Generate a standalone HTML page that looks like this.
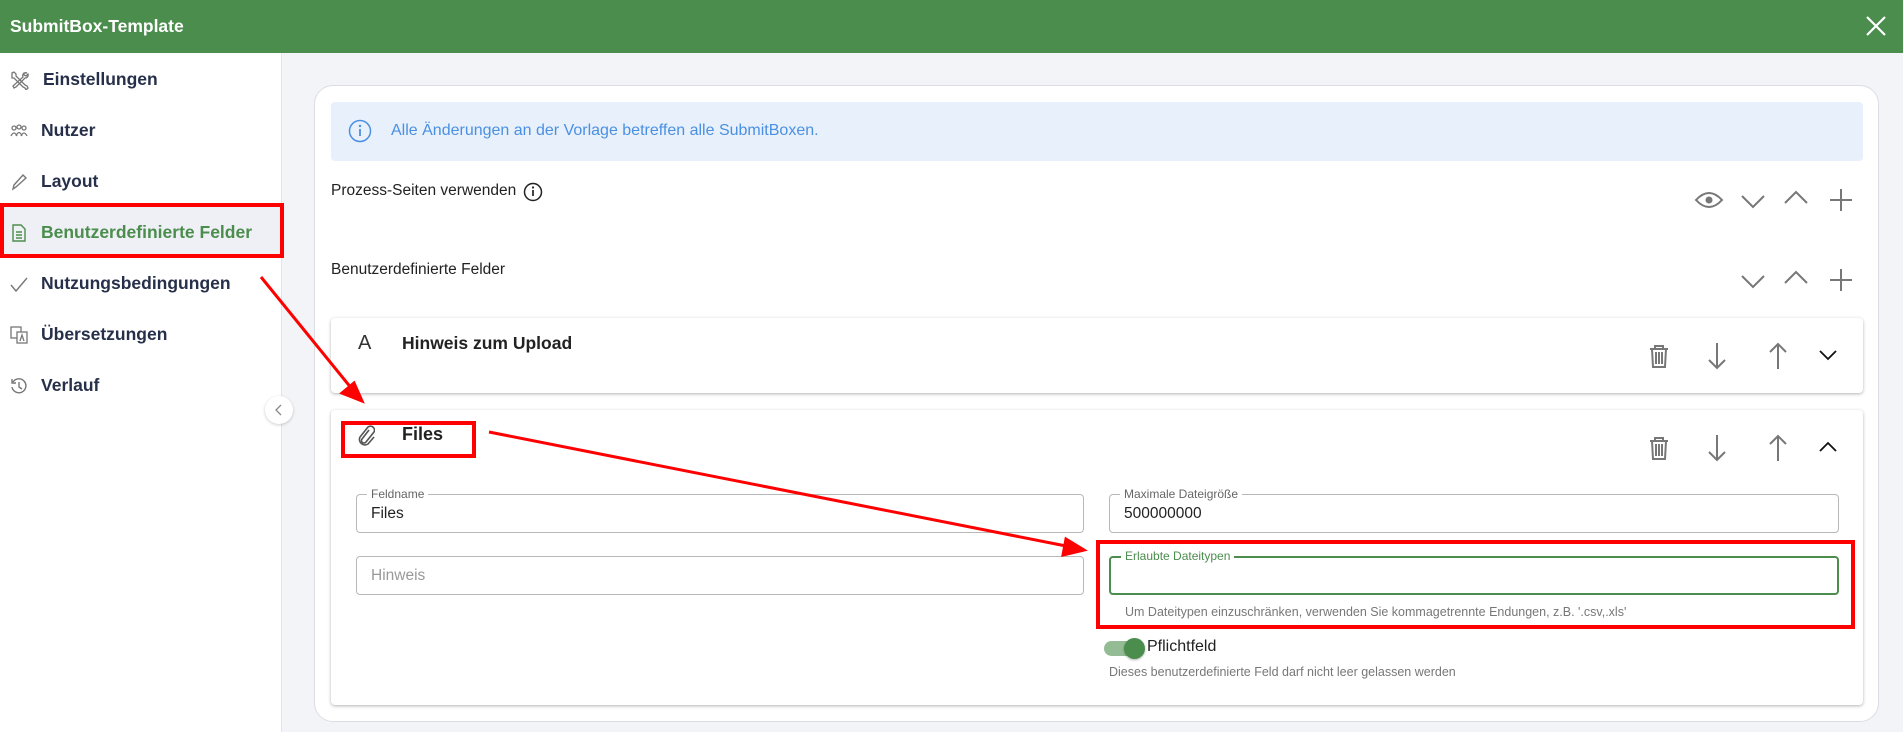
<!DOCTYPE html>
<html><head><meta charset="utf-8"><style>
*{margin:0;padding:0;box-sizing:border-box}
body{width:1903px;height:732px;overflow:hidden;background:#f3f4f8;font-family:"Liberation Sans",sans-serif;position:relative}
.a{position:absolute}
.hdr{left:0;top:0;width:1903px;height:53px;background:#4b8d4d}
.side{left:0;top:53px;width:282px;height:679px;background:#fff;border-right:1px solid #e2e4ea}
.it{position:absolute;left:0;width:282px;height:51px;display:flex;align-items:center;font-size:17.5px;font-weight:bold;color:#27304a}
.it svg{margin-left:10px;margin-right:13px}
.card{left:314px;top:85px;width:1565px;height:637px;background:#fff;border:1px solid #dcdde3;border-radius:19px}
.sub{background:#fff;border-radius:4px;box-shadow:0 1px 3px rgba(0,0,0,.3)}
.fld{border:1px solid #b8b8b8;border-radius:4px;background:#fff}
.lbl{position:absolute;top:-8px;left:10px;background:#fff;padding:0 4px;font-size:12px;color:#666}
.ic{stroke:#777;fill:none;stroke-width:2}
.red{border:4px solid #f00}
</style></head><body>
<div class="a hdr"></div>
<div class="a" style="left:10px;top:16px;color:#fff;font-weight:bold;font-size:17.5px">SubmitBox-Template</div>
<svg class="a" style="left:1865px;top:15px" width="22" height="22"><path d="M2 2L20 20M20 2L2 20" stroke="#fff" stroke-width="2.2"/></svg>
<div class="a side">
<div class="it" style="top:1px"><svg width="20" height="20" class="ic" style="stroke-width:1.3"><path d="M2 3l2-1 2 2 0 2 9 9 2 1 1 2-2 2-1-2-2-1-9-9h-2z"/><path d="M17 3a3 3 0 0 0-4 4L3 16l1 2 2-1 9-9a3 3 0 0 0 3-4l-2 2-2-1 0-2z"/></svg>Einstellungen</div>
<div class="it" style="top:52px"><svg width="18" height="18" class="ic" style="stroke-width:1.3"><circle cx="4" cy="6" r="2"/><circle cx="9" cy="5" r="2"/><circle cx="14" cy="6" r="2"/><path d="M1 14q3-6 6 0M6 14q3-7 6 0M11 14q3-6 6 0"/></svg>Nutzer</div>
<div class="it" style="top:103px"><svg width="18" height="18" class="ic" style="stroke-width:1.4"><path d="M3 16l1-4 9-10 3 3-10 9z"/></svg>Layout</div>
<div class="it" style="top:154px;background:#eef0f5;color:#4b8d4d"><svg width="18" height="18" fill="none" stroke="#4b8d4d" stroke-width="1.4"><path d="M3 1h8l4 4v12H3zM6 8h6M6 11h6M6 14h6"/></svg>Benutzerdefinierte Felder</div>
<div class="it" style="top:205px"><svg width="18" height="18" class="ic" style="stroke-width:1.4"><path d="M1 10l5 6L17 3"/></svg>Nutzungsbedingungen</div>
<div class="it" style="top:256px"><svg width="18" height="18" class="ic" style="stroke-width:1.3"><rect x="1" y="1" width="10" height="11"/><rect x="7" y="6" width="10" height="11" fill="#fff"/><path d="M10 15l2-6 2 6"/></svg>Übersetzungen</div>
<div class="it" style="top:307px"><svg width="18" height="18" class="ic" style="stroke-width:1.4"><path d="M3 5a7 7 0 1 1-1 5M2 2v4h4M9 5v5l3 2"/></svg>Verlauf</div>
</div>
<div class="a red" style="left:0;top:203px;width:284px;height:55px"></div>
<div class="a" style="left:265px;top:396px;width:28px;height:28px;border-radius:50%;background:#fff;box-shadow:0 1px 3px rgba(0,0,0,.2)"></div>
<svg class="a" style="left:274px;top:403px" width="10" height="14"><path d="M7 2L2 7l5 5" stroke="#888" fill="none" stroke-width="1.3"/></svg>

<div class="a card"></div>
<div class="a" style="left:331px;top:102px;width:1532px;height:59px;background:#e8f0fb;border-radius:4px"></div>
<svg class="a" style="left:348px;top:119px" width="24" height="24"><circle cx="12" cy="12" r="10.5" fill="none" stroke="#4a90e2" stroke-width="1.5"/><path d="M12 10v7" stroke="#4a90e2" stroke-width="1.8"/><circle cx="12" cy="7" r="1.2" fill="#4a90e2"/></svg>
<div class="a" style="left:391px;top:122px;font-size:16px;color:#4a90e2">Alle Änderungen an der Vorlage betreffen alle SubmitBoxen.</div>
<div class="a" style="left:331px;top:182px;font-size:15.5px;color:#222">Prozess-Seiten verwenden</div>
<svg class="a" style="left:523px;top:182px" width="20" height="20"><circle cx="10" cy="10" r="8.5" fill="none" stroke="#222" stroke-width="1.5"/><path d="M10 8v6" stroke="#222" stroke-width="1.7"/><circle cx="10" cy="5.5" r="1.1" fill="#222"/></svg>
<svg class="a" style="left:1694px;top:188px" width="30" height="24"><path d="M2 12q13-14 26 0q-13 14-26 0z" class="ic"/><circle cx="15" cy="12" r="3.5" fill="#777"/></svg>
<svg class="a" style="left:1740px;top:190px" width="26" height="24"><path d="M2 6l11 11 11-11" stroke="#777" fill="none" stroke-width="2"/></svg>
<svg class="a" style="left:1783px;top:186px" width="26" height="24"><path d="M2 17l11-11 11 11" stroke="#777" fill="none" stroke-width="2"/></svg>
<svg class="a" style="left:1829px;top:188px" width="24" height="24"><path d="M12 1v22M1 12h22" stroke="#777" stroke-width="2"/></svg>
<div class="a" style="left:331px;top:261px;font-size:15.5px;color:#222">Benutzerdefinierte Felder</div>
<svg class="a" style="left:1740px;top:270px" width="26" height="24"><path d="M2 6l11 11 11-11" stroke="#777" fill="none" stroke-width="2"/></svg>
<svg class="a" style="left:1783px;top:266px" width="26" height="24"><path d="M2 17l11-11 11 11" stroke="#777" fill="none" stroke-width="2"/></svg>
<svg class="a" style="left:1829px;top:268px" width="24" height="24"><path d="M12 1v22M1 12h22" stroke="#777" stroke-width="2"/></svg>

<div class="a sub" style="left:331px;top:318px;width:1532px;height:75px"></div>
<div class="a" style="left:358px;top:332px;font-size:20px;color:#333">A</div>
<div class="a" style="left:402px;top:333px;font-size:17.5px;font-weight:bold;color:#222">Hinweis zum Upload</div>
<div class="a sub" style="left:331px;top:410px;width:1532px;height:295px"></div>

<svg class="a" style="left:1647px;top:343px" width="24" height="26"><path d="M3 6h18M8 6V3h8v3M5 6l1 18h12l1-18M9 9v12M12 9v12M15 9v12" stroke="#777" fill="none" stroke-width="2"/></svg>
<svg class="a" style="left:1706px;top:342px" width="22" height="28"><path d="M11 1v25M3 18l8 8 8-8" stroke="#777" fill="none" stroke-width="2"/></svg>
<svg class="a" style="left:1767px;top:342px" width="22" height="28"><path d="M11 27V2M3 10l8-8 8 8" stroke="#777" fill="none" stroke-width="2"/></svg>
<svg class="a" style="left:1818px;top:348px" width="20" height="14"><path d="M2 3l8 8 8-8" stroke="#111" fill="none" stroke-width="1.8"/></svg>
<svg class="a" style="left:1647px;top:435px" width="24" height="26"><path d="M3 6h18M8 6V3h8v3M5 6l1 18h12l1-18M9 9v12M12 9v12M15 9v12" stroke="#777" fill="none" stroke-width="2"/></svg>
<svg class="a" style="left:1706px;top:434px" width="22" height="28"><path d="M11 1v25M3 18l8 8 8-8" stroke="#777" fill="none" stroke-width="2"/></svg>
<svg class="a" style="left:1767px;top:434px" width="22" height="28"><path d="M11 27V2M3 10l8-8 8 8" stroke="#777" fill="none" stroke-width="2"/></svg>
<svg class="a" style="left:1818px;top:440px" width="20" height="14"><path d="M2 11l8-8 8 8" stroke="#111" fill="none" stroke-width="1.8"/></svg>

<svg class="a" style="left:357px;top:424px" width="18" height="22"><path d="M12 6l-7 9a2.5 2.5 0 0 0 4 3l8-10a4 4 0 0 0-6-5l-8 10a5.5 5.5 0 0 0 8 7l6-7" stroke="#555" fill="none" stroke-width="1.6"/></svg>
<div class="a" style="left:402px;top:424px;font-size:18px;font-weight:bold;color:#222">Files</div>
<div class="a red" style="left:341px;top:421px;width:135px;height:37px"></div>

<div class="a fld" style="left:356px;top:494px;width:728px;height:39px"><span class="lbl">Feldname</span><span class="a" style="left:14px;top:10px;font-size:15.5px;color:#222">Files</span></div>
<div class="a fld" style="left:1109px;top:494px;width:730px;height:39px"><span class="lbl">Maximale Dateigröße</span><span class="a" style="left:14px;top:10px;font-size:15.5px;color:#222">500000000</span></div>
<div class="a fld" style="left:356px;top:556px;width:728px;height:39px"><span class="a" style="left:14px;top:10px;font-size:15.5px;color:#999">Hinweis</span></div>
<div class="a fld" style="left:1109px;top:556px;width:730px;height:39px;border:2px solid #4b8d4d"><span class="lbl" style="color:#4b8d4d;top:-9px">Erlaubte Dateitypen</span></div>
<div class="a" style="left:1125px;top:605px;font-size:12.5px;color:#777">Um Dateitypen einzuschränken, verwenden Sie kommagetrennte Endungen, z.B. '.csv,.xls'</div>
<div class="a red" style="left:1096px;top:540px;width:759px;height:89px"></div>
<div class="a" style="left:1104px;top:641px;width:32px;height:15px;border-radius:8px;background:#93bb94"></div>
<div class="a" style="left:1124px;top:638px;width:21px;height:21px;border-radius:50%;background:#4b8d4d;box-shadow:0 1px 2px rgba(0,0,0,.3)"></div>
<div class="a" style="left:1147px;top:638px;font-size:16px;color:#222">Pflichtfeld</div>
<div class="a" style="left:1109px;top:665px;font-size:12.5px;color:#777">Dieses benutzerdefinierte Feld darf nicht leer gelassen werden</div>

<svg class="a" style="left:0;top:0" width="1903" height="732"><g stroke="#f00" stroke-width="3" fill="#f00">
<line x1="261" y1="277" x2="352" y2="389"/><path d="M362 401l-20-8 12-10z"/>
<line x1="489" y1="432" x2="1066" y2="546"/><path d="M1084 550l-21 5 3-16z"/></g></svg>
</body></html>
